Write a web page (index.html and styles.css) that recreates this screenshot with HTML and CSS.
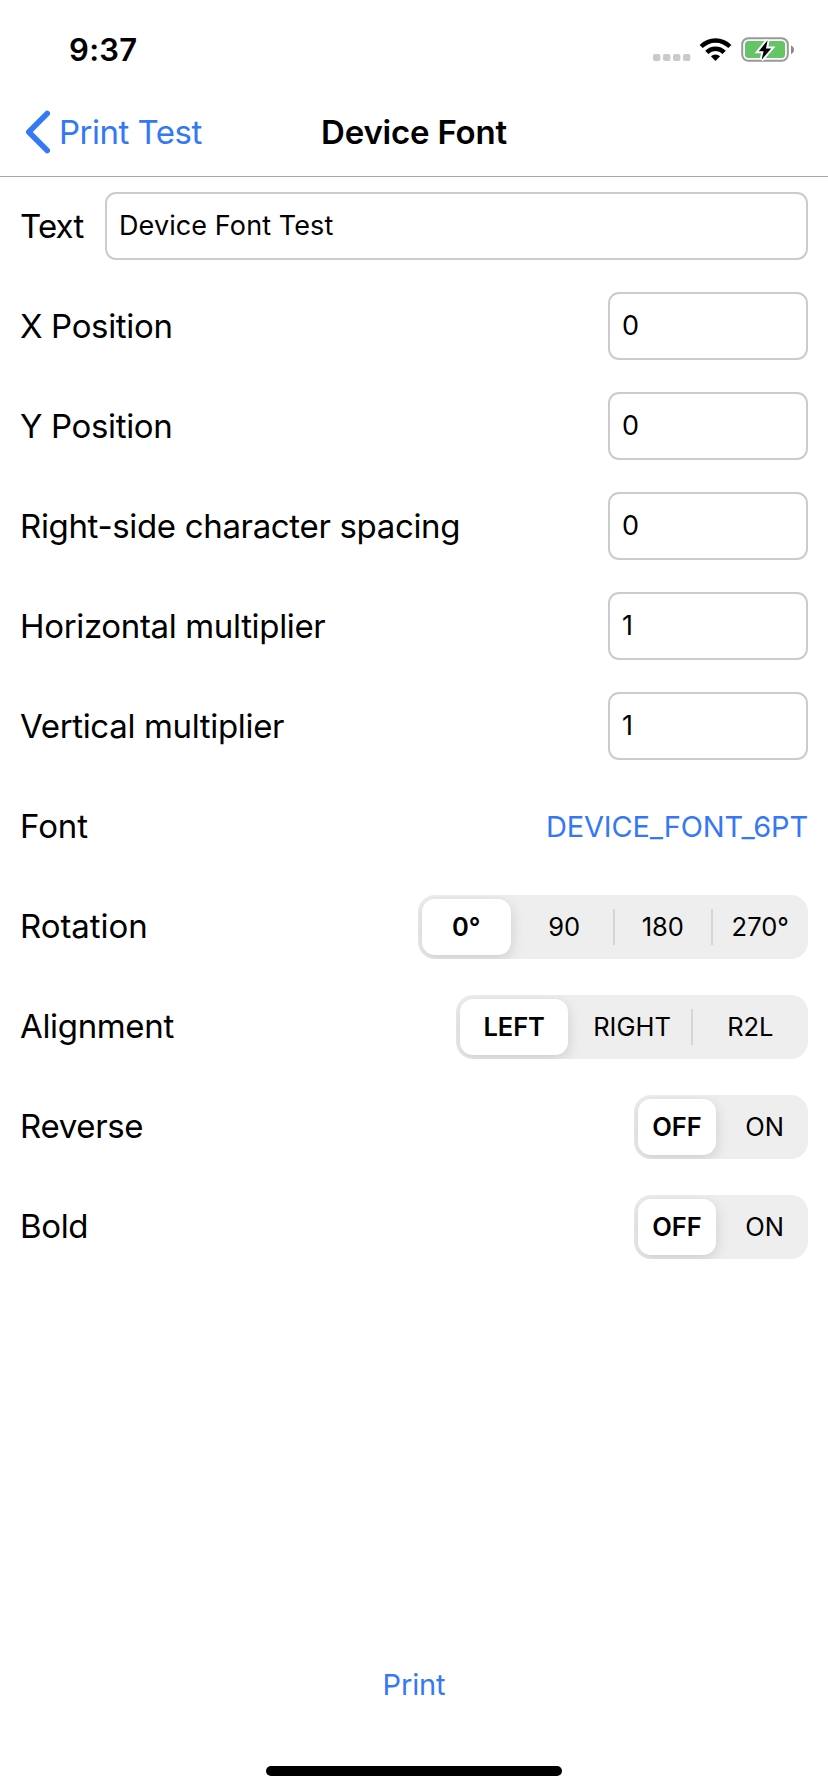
FILE: index.html
```html
<!DOCTYPE html>
<html lang="en">
<head>
<meta charset="utf-8">
<title>Device Font</title>
<link rel="stylesheet" href="styles.css">
</head>
<body>
<div class="screen">
  <header class="status">
    <span class="time">9:37</span>
    <svg class="status-icons" width="144" height="28" viewBox="0 0 144 28">
      <g fill="#cacaca"><rect x="0" y="18" width="7.4" height="7" rx="2"/><rect x="10" y="18" width="7.4" height="7" rx="2"/><rect x="20" y="18" width="7.4" height="7" rx="2"/><rect x="30" y="18" width="7.4" height="7" rx="2"/></g>
      <path d="M46.6 8.9A22.5 22.5 0 0 1 78.4 8.9L75.3 12.1A18 18 0 0 0 49.7 12.1ZM52.2 14.7A14.6 14.6 0 0 1 72.8 14.7L69.6 18A10 10 0 0 0 55.4 18ZM57.9 20.3A6.8 6.8 0 0 1 67.1 20.3L62.5 25Z"/>
      <rect x="89.2" y="2.2" width="45.6" height="22.6" rx="6.2" fill="none" stroke="#999" stroke-width="2"/>
      <rect x="92" y="5" width="40" height="17" rx="3.5" fill="#65c466"/>
      <path d="M138 9.5C142 11 142 16.5 138 18Z" fill="#888"/>
      <path d="M114.6 4.2L105.8 15.2H110.6L108.6 23.8L118.2 12.4H113Z" fill="#000" stroke="#fff" stroke-width="4" paint-order="stroke"/>
    </svg>
  </header>
  <nav class="nav">
    <a class="back">
      <svg width="26" height="44" viewBox="0 0 26 44"><path d="M22.2 3.5L3.8 22L22.2 40.500" fill="none" stroke="#3478f6" stroke-width="5.6" stroke-linecap="round" stroke-linejoin="round"/></svg>
      <span>Print Test</span>
    </a>
    <h1 class="title">Device Font</h1>
  </nav>
  <main class="form">
    <div class="row"><span class="label tight">Text</span><div class="field wide">Device Font Test</div></div>
    <div class="row"><span class="label">X Position</span><div class="field">0</div></div>
    <div class="row"><span class="label">Y Position</span><div class="field">0</div></div>
    <div class="row"><span class="label">Right-side character spacing</span><div class="field">0</div></div>
    <div class="row"><span class="label">Horizontal multiplier</span><div class="field">1</div></div>
    <div class="row"><span class="label">Vertical multiplier</span><div class="field">1</div></div>
    <div class="row"><span class="label loose">Font</span><a class="link font-name">DEVICE_FONT_6PT</a></div>
    <div class="row"><span class="label loose">Rotation</span>
      <div class="segments rotation"><span class="segment on">0°</span><span class="segment">90</span><span class="segment divided">180</span><span class="segment divided">270°</span></div></div>
    <div class="row"><span class="label">Alignment</span>
      <div class="segments alignment"><span class="segment on">LEFT</span><span class="segment">RIGHT</span><span class="segment divided">R2L</span></div></div>
    <div class="row"><span class="label">Reverse</span>
      <div class="segments toggle"><span class="segment on">OFF</span><span class="segment">ON</span></div></div>
    <div class="row"><span class="label">Bold</span>
      <div class="segments toggle"><span class="segment on">OFF</span><span class="segment">ON</span></div></div>
  </main>
  <footer class="footer">
    <a class="link">Print</a>
    <div class="home"></div>
  </footer>
</div>
</body>
</html>
```
FILE: styles.css
```css
* { box-sizing: border-box; }
body { margin: 0; background: #fff; color: #000; font-family: Inter, "Liberation Sans", sans-serif; }
.screen { width: 828px; height: 1792px; display: flex; flex-direction: column; overflow: hidden; }
.status { height: 88px; flex: none; display: flex; justify-content: space-between; padding: 36px 31px 0 69px; }
.time { font-size: 31px; font-weight: 600; line-height: 28px; letter-spacing: .3px; }
.status-icons { display: block; }
.nav { height: 89px; flex: none; display: grid; grid-template-columns: 1fr auto 1fr; align-items: center; border-bottom: 1px solid #aaa; padding: 0 25px; }
.back { display: flex; align-items: center; gap: 8px; color: #3478f6; font-size: 33px; line-height: 40px; letter-spacing: -.5px; }
.back svg { display: block; }
.title { margin: 0; font-size: 33px; font-weight: 600; line-height: 40px; letter-spacing: -.2px; }
.form { flex: 1; display: flex; flex-direction: column; gap: 32px; padding: 15px 20px 0; }
.row { height: 68px; display: flex; align-items: center; justify-content: space-between; }
.label { font-size: 33px; line-height: 40px; white-space: nowrap; letter-spacing: -.34px; }
.tight { letter-spacing: -.8px; }
.loose { letter-spacing: -.05px; }
.field { width: 200px; height: 68px; border: 2px solid #ccc; border-radius: 11px; padding: 0 12px; font-size: 27px; line-height: 63px; letter-spacing: .1px; }
.wide { width: 703px; }
.link { color: #3478f6; font-size: 29px; line-height: 36px; letter-spacing: -.15px; }
.font-name { padding-top: 2px; }
.segments { height: 64px; margin-top: 2px; display: grid; grid-auto-flow: column; grid-auto-columns: 1fr; border-radius: 17px; background: #eee; overflow: hidden; }
.rotation { width: 390px; }
.alignment { width: 352px; }
.toggle { width: 174px; }
.segment { display: flex; align-items: center; justify-content: center; font-size: 25.5px; line-height: 32px; }
.divided { padding-left: 2px; background: linear-gradient(#d5d5d5, #d5d5d5) -1px 14px / 3px 36px no-repeat; }
.on { margin: 4px 5px 4px 4px; border-radius: 13px; background: #fff; font-weight: 600; letter-spacing: -.1px; box-shadow: 0 4px 14px rgba(0,0,0,.14); }
.footer { flex: none; height: 125px; display: flex; flex-direction: column; align-items: center; justify-content: space-between; padding-bottom: 16px; }
.home { width: 296px; height: 10px; border-radius: 5px; background: #000; }
```
